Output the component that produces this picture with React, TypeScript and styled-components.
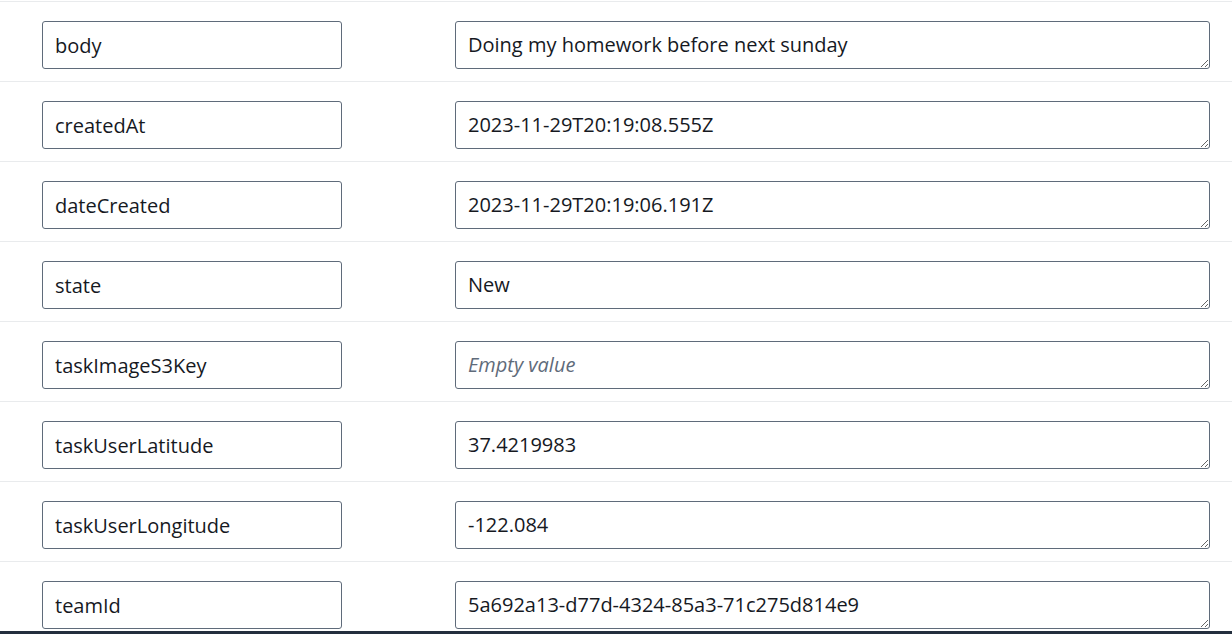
import React from 'react';
import styled, { createGlobalStyle } from 'styled-components';

const GlobalStyle = createGlobalStyle`
  html, body {
    margin: 0;
    padding: 0;
    background: #ffffff;
    overflow: hidden;
  }
  body {
    font-family: "Open Sans", "Noto Sans", sans-serif;
    color: #16191f;
  }
`;

const Page = styled.div`
  display: flex;
  flex-direction: column;
  height: 634px;
`;

const Rows = styled.div`
  flex: 1;
  overflow: hidden;
  padding-top: 1px;
`;

const Row = styled.div`
  display: grid;
  grid-template-columns: 300px 755px;
  column-gap: 113px;
  padding: 19px 0 12px 42px;
  border-top: 1px solid #e9ebed;
`;

const KeyInput = styled.input`
  box-sizing: border-box;
  height: 48px;
  width: 100%;
  margin: 0;
  padding: 0 12px;
  border: 1px solid #5f6b7a;
  border-radius: 3px;
  font-family: "Open Sans", "Noto Sans", sans-serif;
  font-size: 20px;
  color: #16191f;
  background: #ffffff;
  outline: none;
`;

const ValueArea = styled.textarea`
  box-sizing: border-box;
  display: block;
  height: 48px;
  width: 100%;
  margin: 0;
  padding: 9px 12px;
  border: 1px solid #5f6b7a;
  border-radius: 3px;
  font-family: "Open Sans", "Noto Sans", sans-serif;
  font-size: 20px;
  line-height: 28px;
  color: #16191f;
  background: #ffffff;
  resize: vertical;
  overflow: hidden;
  outline: none;

  &::placeholder {
    font-style: italic;
    color: #5f6b7a;
    opacity: 1;
  }
`;

const Footer = styled.div`
  height: 3px;
  background: #232f3e;
`;

const fields: [string, string][] = [
  ['body', 'Doing my homework before next sunday'],
  ['createdAt', '2023-11-29T20:19:08.555Z'],
  ['dateCreated', '2023-11-29T20:19:06.191Z'],
  ['state', 'New'],
  ['taskImageS3Key', ''],
  ['taskUserLatitude', '37.4219983'],
  ['taskUserLongitude', '-122.084'],
  ['teamId', '5a692a13-d77d-4324-85a3-71c275d814e9'],
];

export default function App() {
  return (
    <Page>
      <GlobalStyle />
      <Rows>
        {fields.map(([key, value]) => (
          <Row key={key}>
            <KeyInput defaultValue={key} />
            <ValueArea defaultValue={value} placeholder="Empty value" rows={1} />
          </Row>
        ))}
      </Rows>
      <Footer />
    </Page>
  );
}
